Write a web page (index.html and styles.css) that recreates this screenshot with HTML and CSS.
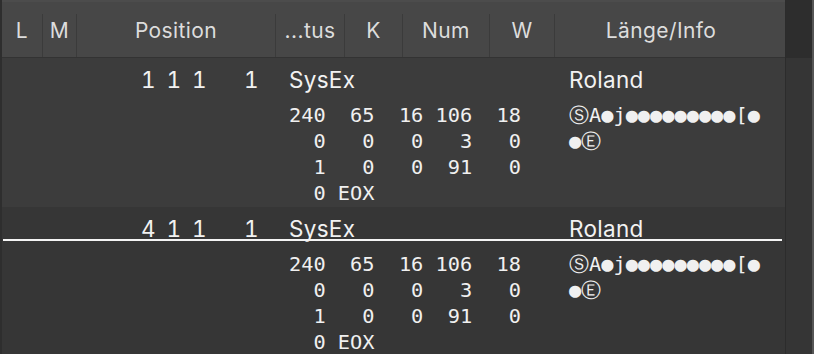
FILE: index.html
```html
<!DOCTYPE html>
<html lang="de">
<head>
    <meta charset="UTF-8">
    <meta name="viewport" content="width=device-width, initial-scale=1.0">
    <title>Event-Liste</title>
    <link rel="stylesheet" href="styles.css">
</head>
<body>
    <div class="event-window">
        <div class="event-list">
            <div class="list-head">
                <div class="hcell">L</div>
                <div class="hcell">M</div>
                <div class="hcell">Position</div>
                <div class="hcell">...tus</div>
                <div class="hcell">K</div>
                <div class="hcell">Num</div>
                <div class="hcell">W</div>
                <div class="hcell info-head">Länge/Info</div>
            </div>

            <div class="event">
                <div class="pos"><span>1</span><span>1</span><span>1</span><span class="tick">1</span></div>
                <div class="status">SysEx</div>
                <div class="info">Roland</div>
<pre class="bytes">240  65  16 106  18
  0   0   0   3   0
  1   0   0  91   0
  0 EOX</pre>
<pre class="chars">ⓈA●j●●●●●●●●●[●
●Ⓔ</pre>
            </div>

            <div class="event alt">
                <div class="pos"><span>4</span><span>1</span><span>1</span><span class="tick">1</span></div>
                <div class="status">SysEx</div>
                <div class="info">Roland</div>
<pre class="bytes">240  65  16 106  18
  0   0   0   3   0
  1   0   0  91   0
  0 EOX</pre>
<pre class="chars">ⓈA●j●●●●●●●●●[●
●Ⓔ</pre>
                <!-- playhead line drawn over the row -->
                <div class="playhead"></div>
            </div>
        </div>
        <div class="scroll-track">
            <div class="scroll-head"></div>
        </div>
        <div class="window-edge"></div>
    </div>
</body>
</html>
```

FILE: styles.css
```css
body {
    margin: 0;
    padding: 0;
    background-color: #3a3a3a;
    font-family: Inter, "Noto Sans", sans-serif;
    overflow: hidden;
}
.event-window {
    display: flex;
    height: 354px;
    overflow: hidden;
}
.event-list {
    width: 783px;
    border-left: 2px solid #2e2e2e;
    background: #3c3c3c;
}
.list-head,
.event {
    display: grid;
    grid-template-columns: 40px 34px 199px 69px 58px 87px 65px 231px;
}
.list-head {
    height: 43px;
    padding-top: 12px;
    border-top: 2px solid #4c4c4c;
    border-bottom: 1px solid #333333;
    background: #474747;
}
.hcell {
    height: 43px;
    line-height: 34px;
    text-align: center;
    font-size: 21px;
    letter-spacing: 0.4px;
    color: #dddddd;
    border-left: 1px solid #3b3b3b;
}
.hcell:first-child {
    border-left: none;
}
.info-head {
    padding-right: 18px;
}
.event {
    position: relative;
    grid-template-rows: 44px 105px;
    background: #3c3c3c;
    color: #f2f2f2;
}
.event.alt {
    background: #363636;
}
.pos,
.status,
.info {
    grid-row: 1;
    line-height: 44px;
    font-size: 22.5px;
    letter-spacing: 0.3px;
}
.pos {
    grid-column: 3;
    display: flex;
    justify-content: flex-end;
    padding-right: 16px;
    font-variant-numeric: tabular-nums;
}
.pos span {
    width: 25.5px;
    text-align: right;
}
.pos .tick {
    width: 52px;
}
.status {
    grid-column: 4 / 8;
    padding-left: 14px;
}
.info {
    grid-column: 8;
    padding-left: 15px;
}
.bytes,
.chars {
    grid-row: 2;
    margin: 0;
    font-family: "DejaVu Sans Mono", monospace;
    font-size: 20.3px;
    line-height: 26px;
    color: #f0f0f0;
}
.bytes {
    grid-column: 4 / 8;
    padding-left: 14px;
}
.chars {
    grid-column: 8;
    padding-left: 15px;
}
.playhead {
    position: absolute;
    left: 1px;
    top: 32px;
    width: 779px;
    height: 2px;
    background: #f4f4f4;
}
.scroll-track {
    width: 26px;
    border-left: 1px solid #2c2c2c;
    background: #353535;
}
.scroll-head {
    height: 58px;
    background: #2d2d2d;
}
.window-edge {
    width: 2px;
    background: #565656;
}
```
